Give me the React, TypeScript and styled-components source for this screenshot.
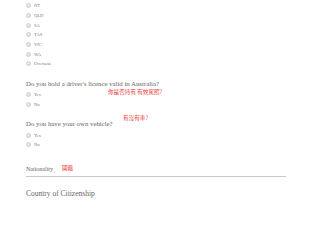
import React from 'react';
import styled, { createGlobalStyle } from 'styled-components';

const GlobalStyle = createGlobalStyle`
  html, body {
    margin: 0;
    padding: 0;
    background: #ffffff;
  }
`;

const Page = styled.div`
  width: 300px;
  height: 200px;
  overflow: hidden;
  padding: 1px 14px 0 26px;
  box-sizing: border-box;
  display: flex;
  flex-direction: column;
  gap: 10px;
  font-family: 'Liberation Serif', 'Times New Roman', serif;
  color: #666666;
`;

const Group = styled.section`
  display: flex;
  flex-direction: column;
  gap: 2px;
`;

const Fields = styled.section`
  display: flex;
  flex-direction: column;
  gap: 12px;
  padding-top: 4px;
`;

const OptionList = styled.ul`
  list-style: none;
  margin: 0;
  padding: 0;
  display: flex;
  flex-direction: column;
`;

const Option = styled.li`
  display: flex;
  align-items: center;
  gap: 3px;
  height: 9.7px;
  font-size: 4.6px;
  color: #777777;
`;

const RadioDot = styled.span`
  width: 5px;
  height: 5px;
  border-radius: 50%;
  background: radial-gradient(circle at 40% 35%, #f2f2f2, #cfcfcf);
  border: 0.5px solid #d0d0d0;
  box-sizing: border-box;
`;

const Question = styled.div`
  position: relative;
  font-size: 6.8px;
  line-height: 9px;
  color: #666666;
`;

const Note = styled.span`
  font-family: 'Noto Sans CJK TC', 'Noto Sans', sans-serif;
  font-size: 5.6px;
  line-height: 7px;
  white-space: nowrap;
  color: #f03a3a;
`;

const FloatingNote = styled(Note)<{ $left: number; $top: number }>`
  position: absolute;
  left: ${(p) => p.$left}px;
  top: ${(p) => p.$top}px;
`;

const Field = styled.div<{ $size: number; $line?: boolean }>`
  display: flex;
  align-items: center;
  gap: 9px;
  font-size: ${(p) => p.$size}px;
  line-height: 10px;
  padding-bottom: 2px;
  border-bottom: ${(p) => (p.$line ? '1px solid #c9c9c9' : 'none')};
  color: #666666;
`;

const states = ['NT', 'QLD', 'SA', 'TAS', 'VIC', 'WA', 'Overseas'];

function Radios({ items }: { items: string[] }) {
  return (
    <OptionList>
      {items.map((s) => (
        <Option key={s}>
          <RadioDot />
          {s}
        </Option>
      ))}
    </OptionList>
  );
}

export default function App() {
  return (
    <>
      <GlobalStyle />
      <Page>
        <Radios items={states} />
        <Group>
          <Question>
            Do you hold a driver's licence valid in Australia?
            <FloatingNote $left={82} $top={10}>你是否持有 有效駕照?</FloatingNote>
          </Question>
          <Radios items={['Yes', 'No']} />
        </Group>
        <Group>
          <Question>
            Do you have your own vehicle?
            <FloatingNote $left={97} $top={-4}>有沒有車?</FloatingNote>
          </Question>
          <Radios items={['Yes', 'No']} />
        </Group>
        <Fields>
          <Field $size={6} $line>
            Nationality
            <Note>國籍</Note>
          </Field>
          <Field $size={7.5}>Country of Citizenship</Field>
        </Fields>
      </Page>
    </>
  );
}
